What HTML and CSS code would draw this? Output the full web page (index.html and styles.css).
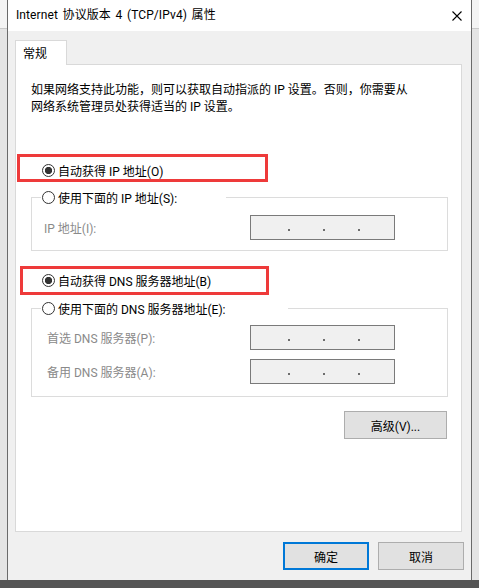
FILE: index.html
```html
<!DOCTYPE html>
<html lang="zh-CN">
<head>
<meta charset="utf-8">
<title>Internet 协议版本 4 (TCP/IPv4) 属性</title>
<link rel="stylesheet" href="styles.css">
</head>
<body>
<div class="screen">
  <div class="desk">
    <div class="window">
      <div class="titlebar">
        <span class="title">Internet 协议版本 4 (TCP/IPv4) 属性</span>
        <svg class="close" width="10" height="10" viewBox="0 0 10 10"><path d="M0.5 0.5L9.5 9.5M9.5 0.5L0.5 9.5" stroke="#000" stroke-width="1.1" fill="none"/></svg>
      </div>
      <div class="client">
        <div class="tabs"><div class="tab">常规</div></div>
        <div class="panel">
          <p class="intro">如果网络支持此功能，则可以获取自动指派的 IP 设置。否则，你需要从<br>网络系统管理员处获得适当的 IP 设置。</p>

          <div class="opt opt-first"><span class="radio on"></span><span>自动获得 IP 地址(O)</span></div>
          <div class="group group-ip">
            <div class="opt legend"><span class="radio"></span><span>使用下面的 IP 地址(S):</span></div>
            <div class="field-row first-field">
              <span class="lbl">IP 地址(I):</span>
              <span class="ipbox"><i class="dot"></i><i class="dot"></i><i class="dot"></i></span>
            </div>
          </div>

          <div class="opt opt-second"><span class="radio on"></span><span>自动获得 DNS 服务器地址(B)</span></div>
          <div class="group group-dns">
            <div class="opt legend"><span class="radio"></span><span>使用下面的 DNS 服务器地址(E):</span></div>
            <div class="field-row first-field">
              <span class="lbl">首选 DNS 服务器(P):</span>
              <span class="ipbox"><i class="dot"></i><i class="dot"></i><i class="dot"></i></span>
            </div>
            <div class="field-row next-field">
              <span class="lbl">备用 DNS 服务器(A):</span>
              <span class="ipbox"><i class="dot"></i><i class="dot"></i><i class="dot"></i></span>
            </div>
          </div>

          <button class="btn adv">高级(V)...</button>

          <div class="mark mark-ip"></div>
          <div class="mark mark-dns"></div>
        </div>
        <div class="footer">
          <button class="btn primary">确定</button>
          <button class="btn">取消</button>
        </div>
      </div>
    </div>
  </div>
  <div class="taskbar"></div>
</div>
</body>
</html>
```

FILE: styles.css
```css
* { box-sizing: border-box; }
html, body { margin: 0; padding: 0; }
body {
  font-family: Roboto, "Noto Sans CJK SC", "Microsoft YaHei", sans-serif;
  font-size: 12px;
  color: #000;
  background: #555;
}
.screen {
  width: 479px;
  height: 588px;
  display: flex;
  flex-direction: column;
  overflow: hidden;
}
.desk {
  height: 580px;
  flex: none;
  display: flex;
  padding-left: 7px;
  background:
    linear-gradient(#c9c9c9, #c9c9c9) 0 28px / 100% 1px no-repeat,
    linear-gradient(#f4f4f4, #f4f4f4) 0 0 / 100% 28px no-repeat,
    #e4e4e4;
}
.window {
  width: 465px;
  height: 580px;
  border-left: 1px solid #6a6a6a;
  border-right: 1px solid #6a6a6a;
  background: #f0f0f0;
  display: flex;
  flex-direction: column;
}
.titlebar {
  height: 31px;
  flex: none;
  background: #fff;
  display: flex;
  align-items: center;
  justify-content: space-between;
  padding: 0 9px 0 8px;
}
.title { line-height: 17px; word-spacing: 1.5px; letter-spacing: 0.1px; }
.close { display: block; }
.client {
  flex: 1;
  display: flex;
  flex-direction: column;
  padding: 9px 9px 10px 7px;
}
.tabs { display: flex; flex: none; }
.tab {
  width: 52px;
  height: 25px;
  border: 1px solid #d9d9d9;
  border-bottom: 0;
  background: #fff;
  padding: 0 0 2px 7px;
  margin-bottom: -1px;
  position: relative;
  z-index: 1;
  display: flex;
  align-items: center;
}
.panel {
  flex: 1;
  background: #fff;
  border: 1px solid #d9d9d9;
  position: relative;
  display: flex;
  flex-direction: column;
}
.intro {
  margin: 0;
  padding: 17px 0 0 15px;
  line-height: 17px;
}
.opt {
  display: flex;
  align-items: center;
  height: 17px;
  gap: 3px;
  white-space: nowrap;
}
.opt-first { margin: 46px 0 0 26px; }
.opt-second { margin: 21px 0 0 26px; }
.radio {
  width: 13px;
  height: 13px;
  flex: none;
  border: 1px solid #333;
  border-radius: 50%;
  background: #fff;
}
.radio.on {
  background: radial-gradient(circle, #333 0 3.3px, #fff 4px);
}
.group {
  border: 1px solid #dcdcdc;
  margin: 18px 13px 0 15px;
}
.group-ip { padding-bottom: 10px; }
.group-dns { margin-top: 19px; padding-bottom: 12px; }
.legend {
  margin: -9px 0 0 9px;
  padding-left: 1px;
  background: #fff;
}
.group-ip .legend { width: 185px; }
.group-dns .legend { width: 247px; }
.field-row {
  display: flex;
  align-items: center;
}
.group-ip .first-field { margin-top: 9px; }
.group-dns .first-field { margin-top: 8px; }
.next-field { margin-top: 9px; }
.lbl {
  width: 218px;
  flex: none;
  color: #8a8a8a;
  white-space: nowrap;
}
.group-ip .lbl { padding-left: 12px; }
.group-dns .lbl { padding-left: 15px; }
.ipbox {
  width: 145px;
  height: 25px;
  border: 1px solid #7a7a7a;
  background: #f0f0f0;
  display: flex;
  align-items: center;
  gap: 33px;
  padding-left: 37px;
}
.dot {
  width: 2px;
  height: 2px;
  margin-top: 4px;
  background: #6d6d6d;
}
.btn {
  font: inherit;
  font-size: 12px;
  color: #000;
  background: #e1e1e1;
  border: 1px solid #adadad;
  padding: 0;
  height: 28px;
}
.btn.primary { border: 2px solid #0078d7; }
.adv {
  align-self: flex-end;
  width: 103px;
  margin: 14px 14px 0 0;
}
.footer {
  display: flex;
  justify-content: flex-end;
  gap: 9px;
  margin: 10px -2px 0 0;
  flex: none;
}
.footer .btn { width: 86px; }
.mark {
  position: absolute;
  border: 3px solid #ee3a3a;
}
.mark-ip { left: 1px; top: 89px; width: 251px; height: 28px; }
.mark-dns { left: 4px; top: 201px; width: 249px; height: 29px; }
.taskbar { flex: 1; background: #555; }
```
